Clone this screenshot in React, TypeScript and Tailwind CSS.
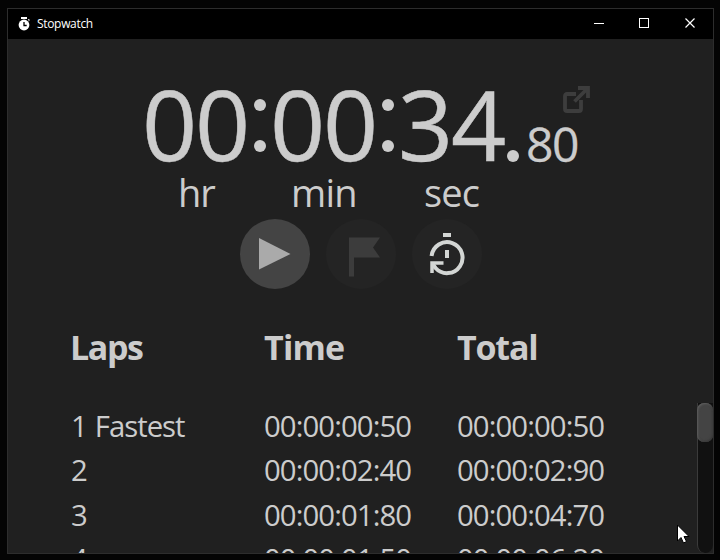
import React from "react";

const laps = [
  ["1 Fastest", "00:00:00:50", "00:00:00:50"],
  ["2", "00:00:02:40", "00:00:02:90"],
  ["3", "00:00:01:80", "00:00:04:70"],
  ["4", "00:00:01:50", "00:00:06:20"],
];

function Digit({ children }: { children: string }) {
  return (
    <span className="flex h-[96px] w-[53px] shrink-0 justify-center">{children}</span>
  );
}

function Colon() {
  return (
    <span className="mt-[24px] flex h-[53px] w-[22px] shrink-0 flex-col justify-between pl-[5px]">
      <i className="size-3 rounded-full bg-[#cccccc]" />
      <i className="size-3 rounded-full bg-[#cccccc]" />
    </span>
  );
}

function TitleBar() {
  return (
    <header className="flex h-[30px] shrink-0 items-center bg-black text-white">
      <svg className="ml-[10px] size-[14px] shrink-0" viewBox="0 0 14 14" fill="none">
        <path d="M3 0h6v2H3z" fill="#fff" />
        <path d="M9.8 2.6l1-.6 1 1-.8 1z" fill="#fff" />
        <circle cx="6" cy="8" r="5.4" fill="#fff" />
        <path d="M6 5v3.5h2.7" stroke="#000" strokeWidth="1.3" />
      </svg>
      <span className="ml-[5px] text-[12px] leading-[30px] tracking-[-0.32px]">Stopwatch</span>
      <svg className="ml-auto h-[30px] w-[138px]" viewBox="0 0 138 30" fill="none" stroke="#fff">
        <path d="M19 14.5h10" />
        <rect x="64.500" y="9.500" width="9" height="9" />
        <path d="M110.500 9.500l9 9M119.500 9.500l-9 9" strokeWidth="1.200" />
      </svg>
    </header>
  );
}

function Controls() {
  return (
    <div className="ml-[232px] mt-[9px] flex gap-4">
      <button className="size-[70px] rounded-full bg-[#444444]">
        <svg className="size-[70px]" viewBox="0 0 70 70">
          <path d="M19 19L50.500 35L19 50.500z" fill="#aaaaaa" />
        </svg>
      </button>
      <button className="size-[70px] rounded-full bg-[#242424]">
        <svg className="size-[70px]" viewBox="0 0 70 70">
          <path d="M23 18.500H54L47 28.500L54 38.500H28V57.500H23z" fill="#3c3c3c" />
        </svg>
      </button>
      <button className="size-[70px] rounded-full bg-[#242424]">
        <svg className="size-[70px]" viewBox="0 0 70 70" fill="none" stroke="#d3d6d4">
          <path d="M31 16h8" strokeWidth="4" />
          <path d="M35 31v8" strokeWidth="4" />
          <path d="M19.600 37A15.500 15.500 0 1 1 23.500 49L20.500 45" strokeWidth="4" />
          <path d="M20 54V44H31.500" strokeWidth="3.500" />
        </svg>
      </button>
    </div>
  );
}

export default function App() {
  return (
    <main className="h-[560px] w-[720px] overflow-hidden bg-[#040404] pl-[7px] pt-2 font-['Open_Sans','Noto_Sans',sans-serif] text-[#cccccc]">
      <div className="relative flex h-[546px] w-[707px] flex-col overflow-hidden border border-[#2d2d2d] bg-[#202020]">
        <TitleBar />
        <section className="mt-[36px] flex h-[97px] shrink-0 pl-[135px] text-[96.5px] leading-[97px] [-webkit-text-stroke:0.5px_#cccccc]">
          <Digit>0</Digit>
          <Digit>0</Digit>
          <Colon />
          <Digit>0</Digit>
          <Digit>0</Digit>
          <Colon />
          <Digit>3</Digit>
          <Digit>4</Digit>
          <i className="ml-[2px] mt-[75px] size-3 shrink-0 rounded-full bg-[#cccccc]" />
          <span className="ml-[7px] mt-[45px] text-[48px] leading-[48px] tracking-[-1.5px] [-webkit-text-stroke:0.3px_#cccccc]">80</span>
          <svg className="-ml-[15px] mt-[11px] size-[27px] shrink-0" viewBox="0 0 27 27" fill="none" stroke="#3d3d3d" strokeWidth="3.800">
            <path d="M13 8H4Q2 8 2 10V23Q2 25 4 25H16Q18 25 18 23V14" />
            <path d="M15 2H25V12M24.500 2.500L11.500 15.500" />
          </svg>
        </section>
        <div className="mt-px flex h-[38px] shrink-0 text-[38px] leading-[38px]">
          <span className="ml-[170px] w-[113px] tracking-[-1px]">hr</span>
          <span className="w-[133px] tracking-[-0.7px]">min</span>
          <span className="tracking-[-0.9px]">sec</span>
        </div>
        <div className="-mt-px">
          <Controls />
        </div>
        <div className="ml-[63px] mt-[41px] grid h-[35px] shrink-0 grid-cols-[193px_193px_180px] text-[34px] font-bold leading-[35px] tracking-[-1.2px]">
          <span className="-ml-px tracking-[-1.4px]">Laps</span>
          <span className="tracking-[-0.8px]">Time</span>
          <span>Total</span>
        </div>
        <div className="mt-[38px] flex min-h-0 flex-1">
          <div className="min-w-0 flex-1 overflow-hidden pl-[63px] pt-[0.5px]">
            {laps.map((lap) => (
              <div key={lap[0]} className="grid h-[44.5px] grid-cols-[193px_193px_180px] text-[29.3px] leading-[44.5px] tracking-[-0.9px]">
                <span className="tracking-[-1px] [word-spacing:1.5px]">{lap[0]}</span>
                <span>{lap[1]}</span>
                <span>{lap[2]}</span>
              </div>
            ))}
          </div>
          <div className="h-[150px] w-4 shrink-0 rounded-b-[8px] border-l border-[#3b3b3b] bg-[#111111]">
            <div className="-ml-px h-[39px] w-4 rounded-[7px] bg-[#444444] shadow-[inset_1px_1px_2px_#5e5e5e,inset_-1px_-1px_2px_#383838]" />
          </div>
        </div>
        <svg className="absolute left-[669px] top-[515px] h-[20px] w-[13px]" viewBox="0 0 13 20">
          <path d="M.5 1V17L4 13.500L6.500 19L9.500 17.500L7 12.500H12z" fill="#fff" stroke="#000" strokeWidth="1" />
        </svg>
      </div>
    </main>
  );
}
